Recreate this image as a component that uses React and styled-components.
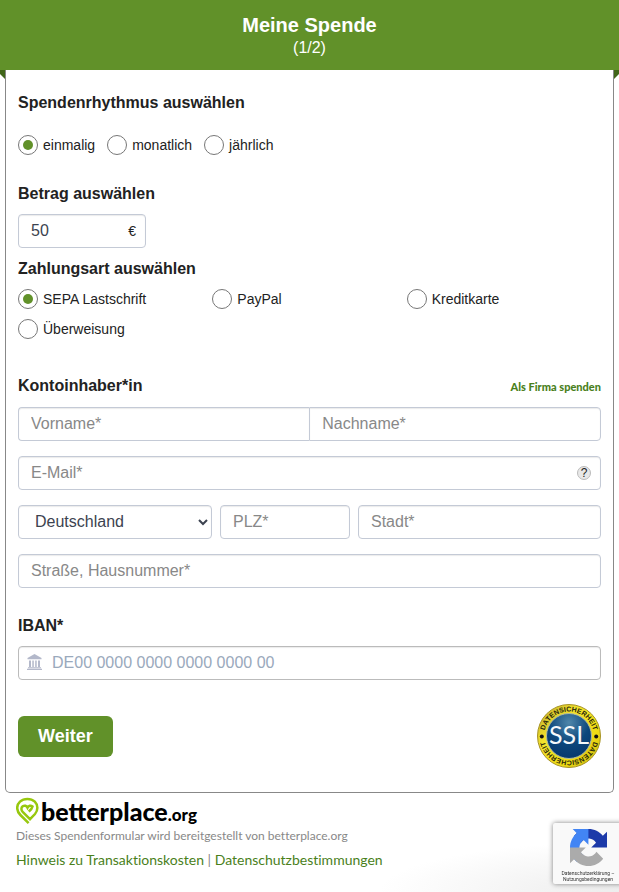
import React, { useState } from 'react';
import styled, { createGlobalStyle } from 'styled-components';

const green = '#619129';
const linkGreen = '#4a7f1b';
const bodyFont = '"Liberation Sans", Arial, sans-serif';
const brandFont = 'Lato, sans-serif';

const GlobalStyle = createGlobalStyle`
  *, *::before, *::after {
    box-sizing: border-box;
  }

  body {
    margin: 0;
    background: #fff;
    color: #222;
    font-family: ${bodyFont};
    font-size: 14px;
  }
`;

const Header = styled.header`
  padding: 13px 12px 11px;
  background: ${green};
  color: #fff;
  text-align: center;
`;

const Title = styled.h1`
  margin: 0;
  font-size: 20px;
  line-height: 24px;
`;

const Step = styled.div`
  font-size: 16px;
  line-height: 22px;
`;

const Folds = styled.div`
  position: relative;

  &::before,
  &::after {
    content: '';
    position: absolute;
    top: 0;
    width: 5px;
    height: 9px;
    background: #416619;
  }

  &::before {
    left: 0;
    clip-path: polygon(0 0, 100% 0, 100% 100%, 0 45%);
  }

  &::after {
    right: 0;
    clip-path: polygon(0 0, 100% 0, 100% 45%, 0 100%);
  }
`;

const Card = styled.form`
  margin: 0 5px;
  padding: 20px 12px 24px;
  border: 1px solid #888;
  border-top: 0;
  border-radius: 0 0 5px 5px;
`;

const Section = styled.section`
  margin-bottom: ${(props) => props.$space}px;
`;

const SectionTitle = styled.h2`
  margin: 0 0 ${(props) => props.$space || 7}px;
  font-size: 16px;
  line-height: 26px;
`;

const SectionHead = styled.div`
  display: flex;
  justify-content: space-between;
  align-items: center;
  margin-bottom: 8px;

  h2 {
    margin: 0;
  }
`;

const CompanyLink = styled.a`
  color: ${linkGreen};
  font-family: ${brandFont};
  font-size: 11px;
  font-weight: 900;
  font-variant-ligatures: none;
  text-decoration: none;
`;

const RadioRow = styled.div`
  display: flex;
  flex-wrap: wrap;
  gap: 12px;
`;

const RadioGrid = styled.div`
  display: grid;
  grid-template-columns: repeat(3, 1fr);
  row-gap: 10px;
`;

const RadioLabel = styled.label`
  display: flex;
  align-items: center;
  gap: 5px;
  line-height: 20px;
`;

const RadioInput = styled.input`
  appearance: none;
  display: grid;
  place-items: center;
  width: 20px;
  height: 20px;
  margin: 0;
  border: 1px solid #777;
  border-radius: 50%;
  background: #fff;

  &:checked::before {
    content: '';
    width: 10px;
    height: 10px;
    border-radius: 50%;
    background: ${green};
  }
`;

const Field = styled.input`
  width: 100%;
  min-width: 0;
  height: 34px;
  padding: 0 12px;
  border: 1px solid #c4cad6;
  border-radius: 4px;
  background: #fff;
  box-shadow: inset 0 1px 1px rgba(0, 0, 0, 0.08);
  color: #3c4350;
  font-family: ${bodyFont};
  font-size: 16px;

  &::placeholder {
    color: #888;
    opacity: 1;
  }
`;

const AmountBox = styled.div`
  position: relative;
  width: 128px;

  span {
    position: absolute;
    top: 0;
    right: 10px;
    line-height: 34px;
  }
`;

const FieldStack = styled.div`
  display: grid;
  gap: 15px;
`;

const NameRow = styled.div`
  display: flex;

  input:first-child {
    border-right: 0;
    border-radius: 4px 0 0 4px;
  }

  input:last-child {
    border-radius: 0 4px 4px 0;
  }
`;

const CityRow = styled.div`
  display: grid;
  grid-template-columns: 194fr 130fr 243fr;
  gap: 8px;
`;

const Country = styled.select`
  width: 100%;
  height: 34px;
  padding: 0 0 2px 12px;
  border: 1px solid #c4cad6;
  border-radius: 4px;
  background: #fff;
  box-shadow: inset 0 1px 1px rgba(0, 0, 0, 0.08);
  color: #3c4350;
  font-family: ${bodyFont};
  font-size: 16px;
`;

const MailBox = styled.div`
  position: relative;
`;

const HelpButton = styled.button`
  position: absolute;
  top: 10px;
  right: 10px;
  width: 14px;
  height: 14px;
  padding: 0;
  border: 1px solid #bbb;
  border-radius: 50%;
  background: #e8e8e8;
  color: #222;
  font-family: ${bodyFont};
  font-size: 12px;
  line-height: 12px;
`;

const IbanBox = styled.div`
  position: relative;

  svg {
    position: absolute;
    top: 8px;
    left: 9px;
  }

  input {
    padding-left: 33px;
    border-color: #bbb;
  }

  input::placeholder {
    color: #9aa9bc;
  }
`;

const Actions = styled.div`
  display: flex;
  justify-content: space-between;
  align-items: center;
`;

const SubmitButton = styled.button`
  padding: 0 20px;
  border: 0;
  border-radius: 6px;
  background: ${green};
  color: #fff;
  font-family: ${bodyFont};
  font-size: 18px;
  font-weight: 700;
  line-height: 41px;
`;

const Footer = styled.footer`
  padding: 4px 16px 22px;
  background: radial-gradient(240px 50px at 100% 100%, #ededed, #fff);
  color: #888;
  font-family: ${brandFont};
`;

const Brand = styled.a`
  display: flex;
  height: 29px;
  color: #000;
  text-decoration: none;
`;

const BrandName = styled.span`
  margin-left: 2px;
  font-size: 25px;
  font-weight: 900;
  line-height: 28px;

  small {
    font-size: 17px;
  }
`;

const Provided = styled.div`
  font-size: 12px;
  line-height: 20px;
  font-variant-ligatures: none;
`;

const Links = styled.nav`
  margin-top: 4px;
  font-size: 14px;
  line-height: 20px;
  font-variant-ligatures: none;

  a {
    color: ${linkGreen};
    text-decoration: none;
  }
`;

const CaptchaBadge = styled.aside`
  position: fixed;
  right: -4px;
  bottom: 8px;
  width: 70px;
  height: 61px;
  padding-top: 6px;
  border-radius: 2px;
  background: #f9f9f9;
  box-shadow: 0 0 5px gray;
  color: #333;
  font-family: Roboto, sans-serif;
  font-size: 5px;
  line-height: 6px;
  text-align: center;

  svg {
    display: block;
    margin: 0 auto 4px;
  }
`;

const Radio = ({ name, label, ...rest }) => (
  <RadioLabel>
    <RadioInput type="radio" name={name} {...rest} />
    {label}
  </RadioLabel>
);

const BankIcon = () => (
  <svg width="15" height="16" viewBox="0 0 15 16" fill="#b3b8ca" aria-hidden="true">
    <path d="M7.5 0 14.5 4v1.2H.5V4z" />
    <path d="M2 6.5h2V13H2zM5.3 6.5h1.5V13H5.3zM8.2 6.5h1.5V13H8.2zM11 6.5h2V13h-2z" />
    <path d="M1 13.3h13v.9H1zM0 14.7h15V16H0z" />
  </svg>
);

const HeartPin = () => (
  <svg width="23" height="28" viewBox="0 0 23 28" fill="none" aria-hidden="true">
    <path
      stroke="#97c80e"
      strokeWidth="2.5"
      d="M12.6 26.2 4.4 18C.2 13.8.2 8.2 4 4.6 8 1 14.8 1 18.8 4.6c3.4 3.4 3.4 8.6.2 12.4L14 22.2 6.9 15.2C4.9 13.2 5 10.6 6.7 9.3c1.9-1.3 3.9-.5 4.8 1.3 1-2 3.2-2.6 5-1.2-.5 2.4-2 3.7-3.7 5.2"
    />
  </svg>
);

const SslSeal = () => (
  <svg width="64" height="64" viewBox="0 0 64 64" role="img" aria-label="SSL Datensicherheit">
    <defs>
      <radialGradient id="seal-blue" cx="50%" cy="20%" r="75%">
        <stop offset="0" stopColor="#4f86aa" />
        <stop offset=".6" stopColor="#0d477c" />
        <stop offset="1" stopColor="#083a70" />
      </radialGradient>
      <linearGradient id="seal-gold" x1="0" y1="0" x2="1" y2="1">
        <stop offset="0" stopColor="#b8a52c" />
        <stop offset=".35" stopColor="#f5e52c" />
        <stop offset=".7" stopColor="#eedb13" />
        <stop offset="1" stopColor="#c4af12" />
      </linearGradient>
      <path id="seal-top" d="M7.5 27.5A25 25 0 0 1 56.5 27.5" />
      <path id="seal-bottom" d="M56.5 36.5A25 25 0 0 1 7.5 36.5" />
    </defs>
    <circle cx="32" cy="32" r="31.5" fill="url(#seal-gold)" stroke="#a79325" />
    <circle cx="32" cy="32" r="22.5" fill="url(#seal-blue)" stroke="#b0b9a0" />
    <g fill="#2b290c" fontFamily="Liberation Sans" fontSize="7" fontWeight="700" textAnchor="middle">
      <text>
        <textPath href="#seal-top" startOffset="50%">DATENSICHERHEIT</textPath>
      </text>
      <text>
        <textPath href="#seal-bottom" startOffset="50%">DATENSICHERHEIT</textPath>
      </text>
    </g>
    <circle cx="4.8" cy="32.5" r="2" fill="#111" />
    <circle cx="59.2" cy="32.5" r="2" fill="#111" />
    <text x="32" y="40" fill="#f5f8fb" fontFamily="Lato" fontSize="25" textAnchor="middle">
      SSL
    </text>
  </svg>
);

const CaptchaLogo = () => (
  <svg width="37" height="37" viewBox="0 0 64 64" aria-hidden="true">
    <path
      fill="#1c3aa9"
      d="M64 31.955a33 33 0 0 0-.033-1.37V4.687l-7.16 7.16C50.948 4.674 42.033.093 32.05.093c-10.4 0-19.622 4.96-25.458 12.64l11.736 11.86a15.55 15.55 0 0 1 4.754-5.334c2.05-1.6 4.952-2.906 8.968-2.906.485 0 .86.057 1.135.163 4.976.393 9.288 3.14 11.828 7.124l-8.307 8.307L64 31.953"
    />
    <path
      fill="#4285f4"
      d="M31.862.094a33 33 0 0 0-1.37.033H4.594l7.16 7.16C4.58 13.147 0 22.06 0 32.046c0 10.4 4.96 19.622 12.64 25.458L24.5 45.768a15.55 15.55 0 0 1-5.334-4.754c-1.6-2.05-2.906-4.952-2.906-8.968 0-.485.057-.86.163-1.135.393-4.976 3.14-9.288 7.124-11.828l8.307 8.307L31.86.095"
    />
    <path
      fill="#ababab"
      d="M.001 32.045a33 33 0 0 0 .033 1.37v25.898l7.16-7.16c5.86 7.173 14.774 11.754 24.76 11.754 10.4 0 19.622-4.96 25.458-12.64l-11.736-11.86a15.55 15.55 0 0 1-4.754 5.334c-2.05 1.6-4.952 2.906-8.968 2.906-.485 0-.86-.057-1.135-.163-4.976-.393-9.288-3.14-11.828-7.124l8.307-8.307L.001 32.045"
    />
  </svg>
);

const App = () => {
  const [rhythm, setRhythm] = useState('einmalig');
  const [method, setMethod] = useState('SEPA Lastschrift');

  return (
    <>
      <GlobalStyle />
      <Header>
        <Title>Meine Spende</Title>
        <Step>(1/2)</Step>
      </Header>
      <Folds />
      <Card onSubmit={(e) => e.preventDefault()}>
        <Section $space={26}>
          <SectionTitle $space={19}>Spendenrhythmus auswählen</SectionTitle>
          <RadioRow>
            {['einmalig', 'monatlich', 'jährlich'].map((item) => (
              <Radio
                key={item}
                name="rhythm"
                label={item}
                checked={rhythm === item}
                onChange={() => setRhythm(item)}
              />
            ))}
          </RadioRow>
        </Section>
        <Section $space={8}>
          <SectionTitle id="amount-title">Betrag auswählen</SectionTitle>
          <AmountBox>
            <Field type="text" aria-labelledby="amount-title" defaultValue="50" />
            <span>€</span>
          </AmountBox>
        </Section>
        <Section $space={34}>
          <SectionTitle>Zahlungsart auswählen</SectionTitle>
          <RadioGrid>
            {['SEPA Lastschrift', 'PayPal', 'Kreditkarte', 'Überweisung'].map((item) => (
              <Radio
                key={item}
                name="method"
                label={item}
                checked={method === item}
                onChange={() => setMethod(item)}
              />
            ))}
          </RadioGrid>
        </Section>
        <Section $space={25}>
          <SectionHead>
            <SectionTitle>Kontoinhaber*in</SectionTitle>
            <CompanyLink href="#firma">Als Firma spenden</CompanyLink>
          </SectionHead>
          <FieldStack>
            <NameRow>
              <Field type="text" aria-label="Vorname" placeholder="Vorname*" />
              <Field type="text" aria-label="Nachname" placeholder="Nachname*" />
            </NameRow>
            <MailBox>
              <Field type="email" aria-label="E-Mail" placeholder="E-Mail*" />
              <HelpButton type="button">?</HelpButton>
            </MailBox>
            <CityRow>
              <Country aria-label="Land">
                <option>Deutschland</option>
              </Country>
              <Field type="text" aria-label="PLZ" placeholder="PLZ*" />
              <Field type="text" aria-label="Stadt" placeholder="Stadt*" />
            </CityRow>
            <Field type="text" aria-label="Straße, Hausnummer" placeholder="Straße, Hausnummer*" />
          </FieldStack>
        </Section>
        <Section $space={24}>
          <SectionTitle id="iban-title">IBAN*</SectionTitle>
          <IbanBox>
            <BankIcon />
            <Field type="text" aria-labelledby="iban-title" placeholder="DE00 0000 0000 0000 0000 00" />
          </IbanBox>
        </Section>
        <Actions>
          <SubmitButton type="submit">Weiter</SubmitButton>
          <SslSeal />
        </Actions>
      </Card>
      <Footer>
        <Brand href="#betterplace">
          <HeartPin />
          <BrandName>
            betterplace<small>.org</small>
          </BrandName>
        </Brand>
        <Provided>Dieses Spendenformular wird bereitgestellt von betterplace.org</Provided>
        <Links>
          <a href="#transaktionskosten">Hinweis zu Transaktionskosten</a> |{' '}
          <a href="#datenschutz">Datenschutzbestimmungen</a>
        </Links>
      </Footer>
      <CaptchaBadge>
        <CaptchaLogo />
        Datenschutzerklärung –<br />
        Nutzungsbedingungen
      </CaptchaBadge>
    </>
  );
};

export default App;
